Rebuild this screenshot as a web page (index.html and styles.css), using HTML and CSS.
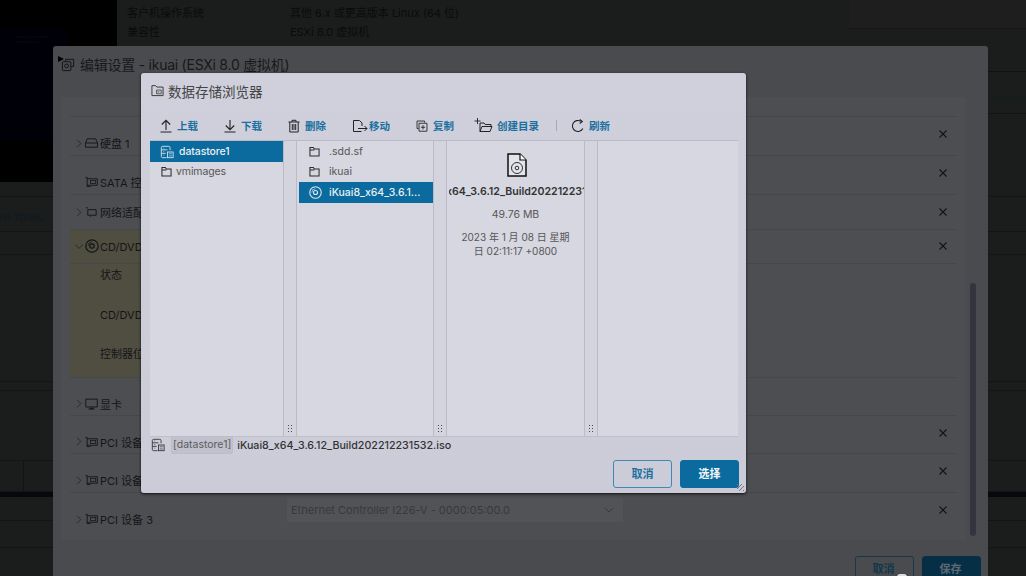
FILE: index.html
```html
<!DOCTYPE html>
<html lang="zh-CN">
<head>
<meta charset="utf-8">
<title>数据存储浏览器</title>
<link rel="stylesheet" href="styles.css">
</head>
<body>
<svg class="defs" width="0" height="0" aria-hidden="true">
  <symbol id="folder" viewBox="0 0 14 14"><path d="M1.200 12.800V1.800h4.300l1.300 2h6v9z M1.200 5.200h5.600" fill="none" stroke="currentColor" stroke-width="1.300"/></symbol>
  <symbol id="ds" viewBox="0 0 16 16"><path d="M7.500 14.500H3a1.500 1.500 0 0 1-1.500-1.500V3A1.500 1.500 0 0 1 3 1.500h7A1.500 1.500 0 0 1 11.500 3v3M1.500 5.500h7M1.500 9.500h5M4 3.500h.8M4 7.500h.8M4 11.500h.8" fill="none" stroke="currentColor"/><rect x="8.500" y="8" width="6.500" height="6.500" fill="none" stroke="currentColor"/><path d="M10 10h3.500M10 12.500h3.500" stroke="currentColor" stroke-width=".8"/></symbol>
  <symbol id="disc" viewBox="0 0 14 14"><circle cx="7" cy="7" r="6.200" fill="none" stroke="currentColor" stroke-width="1.200"/><circle cx="7" cy="7" r="2.200" fill="none" stroke="currentColor" stroke-width="1.200"/><path d="M7 3A4 4 0 0 0 3 7" fill="none" stroke="currentColor" stroke-width=".7"/></symbol>
  <symbol id="chev" viewBox="0 0 8 12"><path d="M1.500 1 6.500 6l-5 5" fill="none" stroke="currentColor"/></symbol>
  <symbol id="x" viewBox="0 0 10 10"><path d="M1.500 1.500l7 7M8.500 1.500l-7 7" fill="none" stroke="currentColor" stroke-width="1.100"/></symbol>
  <symbol id="pci" viewBox="0 0 14 12"><path d="M.5 1h1.800v10M2.300 2.500h11v7h-11M2.300 11H6" fill="none" stroke="currentColor"/><rect x="6" y="4.500" width="5.500" height="3" fill="none" stroke="currentColor" stroke-width=".8"/></symbol>
</svg>

<div class="backdrop">
  <div class="bd-top">
    <div class="console"><div class="console-screen"><span class="console-text">Loading kernel modules<br>Starting services</span></div></div>
    <div class="vm-info">
      <div class="vm-row"><span class="vm-key">客户机操作系统</span><span>其他 6.x 或更高版本 Linux (64 位)</span></div>
      <div class="vm-row"><span class="vm-key">兼容性</span><span>ESXi 8.0 虚拟机</span></div>
    </div>
  </div>
  <div class="bd-rule h15"></div>
  <div class="bd-rule h35 bd-note"><span class="note-clip"><span>ware Tools。</span></span></div>
  <div class="bd-rule h23"></div>
  <div class="bd-rule h127"></div>
  <div class="bd-rule h9"></div>
  <div class="bd-rule h70"></div>
  <div class="bd-rule h31 bd-cell"></div>
  <div class="bd-black"></div>
  <div class="bd-rule h24"></div>
  <div class="bd-rule h27"></div>
  <div class="bd-end"></div>
</div>
<div class="side-lines"></div>
<div class="side-strip"></div>

<section class="edit-modal">
  <span class="pointer"></span>
  <header class="edit-head">
    <svg class="edit-icon" width="15" height="15" viewBox="0 0 16 16"><path d="M5 5V2.500h8.500V10H11" fill="none" stroke="currentColor"/><rect x="1.500" y="5" width="9" height="9.500" rx="1" fill="none" stroke="currentColor"/><circle cx="6" cy="9.500" r="2" fill="none" stroke="currentColor"/></svg>
    <h2>编辑设置 - ikuai (ESXi 8.0 虚拟机)</h2>
  </header>
  <div class="edit-body">
    <div class="edit-panel">
      <div class="hw-list">
        <div class="hw-row hw-top"></div>
        <div class="hw-row hw-39 low"><svg class="chev"><use href="#chev"/></svg><svg class="hw-icon" viewBox="0 0 14 12"><path d="M.5 10.500V6L2.500 1.500h9L13.500 6v4.500zM.5 6h13" fill="none" stroke="currentColor"/></svg><span>硬盘 1</span><svg class="rm"><use href="#x"/></svg></div>
        <div class="hw-row hw-39 low"><i class="nochev"></i><svg class="hw-icon" viewBox="0 0 14 12"><use href="#pci"/></svg><span>SATA 控制器 0</span><svg class="rm"><use href="#x"/></svg></div>
        <div class="hw-row hw-35"><svg class="chev"><use href="#chev"/></svg><svg class="hw-icon" viewBox="0 0 14 12"><path d="M3 3.500h9v6H3zM1 1.500h2M6 10.500v1" fill="none" stroke="currentColor"/></svg><span>网络适配器 1</span><svg class="rm"><use href="#x"/></svg></div>
        <div class="cd-block">
          <div class="hw-row hw-34 cd-head"><svg class="chev chev-open"><use href="#chev"/></svg><svg class="hw-disc"><use href="#disc"/></svg><span>CD/DVD 驱动器 1</span><svg class="rm"><use href="#x"/></svg></div>
          <div class="cd-sub cd-a">状态</div>
          <div class="cd-sub cd-b">CD/DVD 介质</div>
          <div class="cd-sub cd-c">控制器位置</div>
        </div>
        <div class="hw-row hw-38 low"><svg class="chev"><use href="#chev"/></svg><svg class="hw-icon" viewBox="0 0 14 12"><path d="M.8.800h12.400v8.400H.8z" fill="none" stroke="currentColor"/><path d="M5 10h4v1H5zM3.500 11h7v1h-7z" fill="currentColor"/></svg><span>显卡</span></div>
        <div class="hw-row hw-38 low"><svg class="chev"><use href="#chev"/></svg><svg class="hw-icon" viewBox="0 0 14 12"><use href="#pci"/></svg><span>PCI 设备 1</span><svg class="rm"><use href="#x"/></svg></div>
        <div class="hw-row hw-39 low"><svg class="chev"><use href="#chev"/></svg><svg class="hw-icon" viewBox="0 0 14 12"><use href="#pci"/></svg><span>PCI 设备 2</span><svg class="rm"><use href="#x"/></svg></div>
        <div class="hw-row hw-38 hw-last low"><svg class="chev"><use href="#chev"/></svg><svg class="hw-icon" viewBox="0 0 14 12"><use href="#pci"/></svg><span>PCI 设备 3</span><div class="select">Ethernet Controller I226-V - 0000:05:00.0<svg class="sel-chev" viewBox="0 0 12 8"><path d="M2 2l4 4 4-4" fill="none" stroke="currentColor"/></svg></div><svg class="rm"><use href="#x"/></svg></div>
      </div>
    </div>
    <div class="track"><div class="thumb"></div></div>
  </div>
  <footer class="edit-foot">
    <button class="btn-dim btn-dim-o">取消</button>
    <button class="btn-dim btn-dim-s">保存</button>
  </footer>
</section>
<span class="cursor-bit"></span>

<section class="browser">
  <header class="br-head">
    <svg class="br-logo" width="13" height="13" viewBox="0 0 14 14"><path d="M1 12.500V1.800h4l1.300 1.500h6.700v9.200z" fill="none" stroke="currentColor"/><path d="M6 6.500h5v4H6zM7 8.500h2" fill="none" stroke="currentColor" stroke-width=".8"/></svg>
    <h1>数据存储浏览器</h1>
  </header>
  <nav class="toolbar">
    <button class="tool t-up"><svg width="14" height="14" viewBox="0 0 14 14"><path d="M7 11V1.500M2.800 5.500 7 1.300l4.200 4.200M1.500 13h11" fill="none" stroke="currentColor" stroke-width="1.100"/></svg><span>上载</span></button>
    <button class="tool t-down"><svg width="14" height="14" viewBox="0 0 14 14"><path d="M7 1v9.500M2.800 6.500 7 10.700l4.200-4.200M1.500 13h11" fill="none" stroke="currentColor" stroke-width="1.100"/></svg><span>下载</span></button>
    <button class="tool t-del"><svg width="14" height="14" viewBox="0 0 14 14"><path d="M1.500 3h11M5 3V1.300h4V3M2.800 3v10h8.400V3M5.300 5v6M7 5v6M8.700 5v6" fill="none" stroke="currentColor"/></svg><span>删除</span></button>
    <button class="tool t-move"><svg width="16" height="14" viewBox="0 0 16 14"><path d="M9.500 12.500h-8v-11h6l2.500 2.500v3M6 9.500h9M12.500 7l2.500 2.500-2.500 2.500" fill="none" stroke="currentColor"/></svg><span>移动</span></button>
    <button class="tool t-copy"><svg width="12" height="12" viewBox="0 0 14 14"><path d="M3 10H1.200V1.200H10V3" fill="none" stroke="currentColor"/><path d="M3.500 3.800h9.300v9.300H3.500zM8.200 6v5M5.700 8.500h5" fill="none" stroke="currentColor"/></svg><span>复制</span></button>
    <button class="tool t-mk"><svg width="19" height="15" viewBox="0 0 19 15"><path d="M3.500 0v6M.5 3h6" stroke="currentColor" stroke-width=".9" fill="none"/><path d="M6 13.500V5h4l1.200 1.500H17v2M6 13.500h10l2-5H8l-2 5" fill="none" stroke="currentColor"/></svg><span>创建目录</span></button>
    <i class="tool-sep"></i>
    <button class="tool t-re"><svg width="14" height="14" viewBox="0 0 14 14"><path d="M11.800 9.500A5.500 5.500 0 1 1 9.800 2.300" fill="none" stroke="currentColor" stroke-width="1.100"/><path d="M8.700.5l2.600 2-2.600 2" fill="none" stroke="currentColor" stroke-width="1.100"/></svg><span>刷新</span></button>
  </nav>
  <div class="panes">
    <div class="pane pane-1">
      <div class="item item-on item-ds"><svg width="14" height="14"><use href="#ds"/></svg><span>datastore1</span></div>
      <div class="item item-vm"><svg class="ic-folder" width="11" height="11"><use href="#folder"/></svg><span>vmimages</span></div>
    </div>
    <div class="gutter"><span class="grip"></span></div>
    <div class="pane pane-2">
      <div class="item"><svg class="ic-folder" width="11" height="11"><use href="#folder"/></svg><span>.sdd.sf</span></div>
      <div class="item"><svg class="ic-folder" width="11" height="11"><use href="#folder"/></svg><span>ikuai</span></div>
      <div class="item item-on item-iso"><svg width="13" height="13"><use href="#disc"/></svg><span>iKuai8_x64_3.6.1...</span></div>
    </div>
    <div class="gutter"><span class="grip"></span></div>
    <div class="pane pane-3">
      <svg class="file-ic" width="20" height="24" viewBox="0 0 20 24"><path d="M1 1h12l6 6v16H1z" fill="#e3e4ea" stroke="#111" stroke-width="1.500"/><path d="M13 1v6h6" fill="#fff" stroke="#111" stroke-width="1.200"/><circle cx="10" cy="15" r="5.500" fill="none" stroke="#333"/><circle cx="10" cy="15" r="1.800" fill="none" stroke="#333"/></svg>
      <div class="file-name"><span>iKuai8_x64_3.6.12_Build202212231532.iso</span></div>
      <div class="file-size">49.76 MB</div>
      <div class="file-date">2023 年 1 月 08 日 星期日 02:11:17 +0800</div>
    </div>
    <div class="gutter"><span class="grip"></span></div>
    <div class="pane pane-4"></div>
  </div>
  <div class="path-bar">
    <svg width="14" height="14"><use href="#ds"/></svg>
    <span class="tag">[datastore1]</span>
    <span class="path">iKuai8_x64_3.6.12_Build202212231532.iso</span>
  </div>
  <footer class="br-foot">
    <button class="btn btn-o">取消</button>
    <button class="btn btn-s">选择</button>
  </footer>
  <span class="resize"></span>
</section>
</body>
</html>
```

FILE: styles.css
```css
* { box-sizing: border-box; }
html, body { margin: 0; width: 1026px; height: 576px; overflow: hidden; }
body { position: relative; background: #1b1c1d; font-family: Inter, "Noto Sans CJK SC", sans-serif; font-size: 11px; }
.defs { position: absolute; }
button { font: inherit; cursor: default; }
svg { display: block; flex: none; }

/* page behind the dialogs */
.backdrop { display: flex; flex-direction: column; height: 576px; color: #0d0d0d; }
.bd-top { display: flex; height: 182px; }
.console { width: 117px; background: #000; padding-top: 30px; }
.console-screen { width: 68px; height: 110px; background: #000009; padding: 5px 0 0 15px; }
.console-text { display: block; font-size: 3px; line-height: 5px; color: #0e0e20; white-space: nowrap; overflow: hidden; }
.vm-info { flex: 1; padding: 4px 0 0 10px; background: #1b1c1c; }
.vm-row { display: flex; height: 19px; line-height: 19px; font-size: 11px; color: #0b0b0b; }
.vm-key { width: 163px; }
.bd-rule { flex: none; background: #1b1c1c; border-bottom: 1px solid #141515; }
.h15 { height: 15px; }
.h35 { height: 35px; }
.h23 { height: 23px; }
.h127 { height: 127px; }
.h9 { height: 9px; }
.h70 { height: 70px; }
.h31 { height: 31px; }
.h24 { height: 24px; }
.h27 { height: 27px; }
.bd-note { display: flex; align-items: center; }
.note-clip { display: flex; justify-content: flex-end; width: 52px; overflow: hidden; white-space: nowrap; font-size: 11px; color: #0e1a20; padding-top: 3px; }
.bd-cell { background: linear-gradient(90deg, #1b1c1c 23px, #111213 23px, #111213 24px, #1b1c1c 24px); }
.bd-black { flex: none; height: 5px; background: #05090c; }
.bd-end { flex: 1; background: #1b1c1c; }
.side-lines { position: absolute; left: 849px; top: 0; width: 177px; height: 29px; background: #1e1e1e; border-bottom: 1px solid #151616; }
.side-strip { position: absolute; left: 988px; top: 71px; width: 38px; height: 43px; border-top: 1px solid #101111; border-bottom: 1px solid #121313; background: linear-gradient(#1b1c1c 25px, #0f1c20 25px, #0f1c20 26px, #1b1c1c 26px); }

/* edit settings modal */
.edit-modal { position: absolute; left: 53px; top: 46px; width: 935px; height: 540px; background: #4a4b4f; border-radius: 3px 3px 0 0; display: flex; flex-direction: column; color: #111; }
.pointer { position: absolute; left: 5px; top: 10px; border-left: 6px solid #000; border-top: 3px solid transparent; border-bottom: 3px solid transparent; }
.edit-head { height: 51px; display: flex; align-items: flex-start; padding: 11px 0 0 8px; gap: 4px; color: #111; }
.edit-head h2 { margin: 0; font-size: 14px; line-height: 15px; font-weight: 400; color: #17181a; white-space: nowrap; letter-spacing: -.25px; }
.edit-body { display: flex; height: 443px; padding-left: 8px; }
.edit-panel { width: 905px; height: 443px; background: #4d4e52; padding: 0 9px; }
.hw-list { display: flex; flex-direction: column; }
.hw-row { display: flex; align-items: center; position: relative; padding-left: 6px; border-bottom: 1px solid #46474b; font-size: 11px; color: #141516; white-space: nowrap; }
.low { padding-top: 14px; }
.hw-top { height: 20px; }
.hw-39 { height: 39px; }
.hw-38 { height: 38px; }
.hw-35 { height: 35px; }
.hw-34 { height: 34px; }
.hw-last { border-bottom: 0; }
.chev { width: 6px; height: 11px; color: #1e1f20; margin-right: 3px; }
.chev-open { transform: rotate(90deg); }
.nochev { width: 9px; }
.hw-icon { width: 13px; height: 12px; margin-right: 2px; color: #141516; }
.hw-disc { width: 14px; height: 14px; margin-right: 1px; color: #141516; }
.rm { position: absolute; left: 868px; top: 50%; margin-top: -5px; width: 10px; height: 10px; color: #121314; }
.low .rm { margin-top: -7px; }
.cd-block { position: relative; height: 148px; display: flex; flex-direction: column; border-bottom: 1px solid #46474b; }
.cd-head, .cd-sub { background: linear-gradient(90deg, #4f4e41 300px, transparent 300px); }
.cd-sub { padding-left: 30px; color: #141516; font-size: 11px; }
.cd-a { height: 38px; padding-top: 2px; }
.cd-b { height: 41px; padding-top: 4px; }
.cd-c { height: 35px; padding-top: 3px; }
.select { position: absolute; left: 217px; top: 5px; width: 336px; height: 24px; padding: 5px 0 0 4px; background: #525357; color: #38393c; font-size: 11px; }
.sel-chev { position: absolute; right: 8px; top: 8px; width: 12px; height: 8px; }
.track { margin: 0 0 0 4px; width: 6px; padding-top: 186px; }
.thumb { width: 6px; height: 253px; background: #34343e; border-radius: 3px; }
.edit-foot { display: flex; justify-content: flex-end; gap: 8px; padding: 16px 7px 0 0; }
.btn-dim { width: 59px; height: 28px; border-radius: 3px; font-size: 11px; font-weight: 700; padding: 0 2px 5px 0; }
.btn-dim-o { background: transparent; border: 1px solid #16384a; color: #12374a; }
.btn-dim-s { background: #062f45; border: 1px solid #062f45; color: #5d6a72; }
.cursor-bit { position: absolute; left: 897px; top: 574px; width: 10px; height: 6px; border-radius: 5px; background: #ddd; }

/* datastore browser dialog */
.browser { position: absolute; left: 141px; top: 73px; width: 605px; height: 420px; padding: 0 8px 0 9px; border-radius: 3px; background: linear-gradient(#cfd0db, #cbccd8); box-shadow: 0 1px 3px rgba(0,0,0,.8); display: flex; flex-direction: column; color: #565656; }
.br-head { height: 37px; display: flex; align-items: center; gap: 4px; padding: 0 0 2px 1px; color: #333; }
.br-head h1 { margin: 0; font-size: 13.500px; font-weight: 400; color: #444; }
.toolbar { height: 31px; display: flex; align-items: center; padding-top: 1px; border-bottom: 1px solid #b9bac4; }
.tool { display: flex; align-items: center; gap: 4px; padding: 0; border: 0; background: none; color: #222; }
.tool span { color: #1a6f9f; font-size: 10.500px; font-weight: 700; }
.t-up { margin-left: 9px; }
.t-down { margin-left: 25px; }
.t-del { margin-left: 25px; }
.t-move { margin-left: 26px; gap: 1px; }
.t-copy { margin-left: 26px; gap: 5px; }
.t-mk { margin-left: 20px; }
.tool-sep { width: 1px; height: 11px; background: #a7a8b3; margin: 0 14px 0 17px; }
.panes { height: 296px; display: flex; background: #d6d7e1; border-bottom: 1px solid #bfc0cb; }
.pane { flex: none; height: 100%; overflow: hidden; }
.pane-1 { width: 133px; }
.pane-2 { width: 136px; padding-left: 2px; }
.pane-3 { width: 137px; text-align: center; }
.pane-4 { flex: 1; }
.gutter { width: 14px; flex: none; position: relative; border-left: 1px solid #babbc6; border-right: 1px solid #babbc6; background: #d3d4de; }
.grip { position: absolute; left: 3px; bottom: 3px; width: 6px; height: 9px; background-image: radial-gradient(circle, #4c4c52 .9px, transparent 1px); background-size: 3px 3px; }
.item { height: 20px; display: flex; align-items: center; gap: 9px; padding-left: 10px; color: #565656; font-size: 10.500px; white-space: nowrap; }
.item-ds { height: 21px; gap: 5px; letter-spacing: -.1px; }
.item-vm { height: 19px; gap: 4px; padding-left: 11px; letter-spacing: -.1px; }
.item-iso { height: 21px; margin-top: 1px; gap: 7px; }
.item-on { background: #0b6a9e; color: #e9f0f4; font-weight: 500; }
.item-on svg { color: #d9e6ee; }
.ic-folder { color: #2a2a2a; }
.file-ic { margin: 12px 0 0 60px; }
.file-name { margin: 8px 0 0 2px; padding-left: 1px; height: 14px; line-height: 14px; font-weight: 600; font-size: 10.600px; color: #333; overflow: hidden; white-space: nowrap; display: flex; justify-content: center; }
.file-size { margin-top: 9px; font-size: 10.500px; line-height: 14px; color: #565656; }
.file-date { margin-top: 8px; padding: 0 10px; font-size: 10px; line-height: 14px; color: #565656; }
.path-bar { height: 18px; margin-top: -1px; display: flex; align-items: center; padding-left: 1px; color: #333; }
.tag { margin-left: 6px; height: 18px; line-height: 15px; padding: 0 1px; border: 1px solid #bcbdc8; border-radius: 2px; background: #c0c1cc; color: #5c5c62; font-size: 10.500px; }
.path { margin-left: 4px; font-size: 10.700px; font-weight: 500; color: #333; white-space: nowrap; }
.br-foot { display: flex; justify-content: flex-end; gap: 8px; padding: 6px 0 0; margin-right: -1px; }
.btn { width: 59px; height: 28px; border-radius: 3px; font-size: 11px; font-weight: 700; padding: 0 0 2px; }
.btn-o { background: transparent; border: 1px solid #3f8ab5; color: #1a6f9f; }
.btn-s { background: #0b6a9e; border: 1px solid #0b6a9e; color: #f2f5f7; }
.resize { position: absolute; right: 2px; bottom: 2px; width: 7px; height: 7px; background: repeating-linear-gradient(135deg, #77777e 0 1px, transparent 1px 3px); }
```
